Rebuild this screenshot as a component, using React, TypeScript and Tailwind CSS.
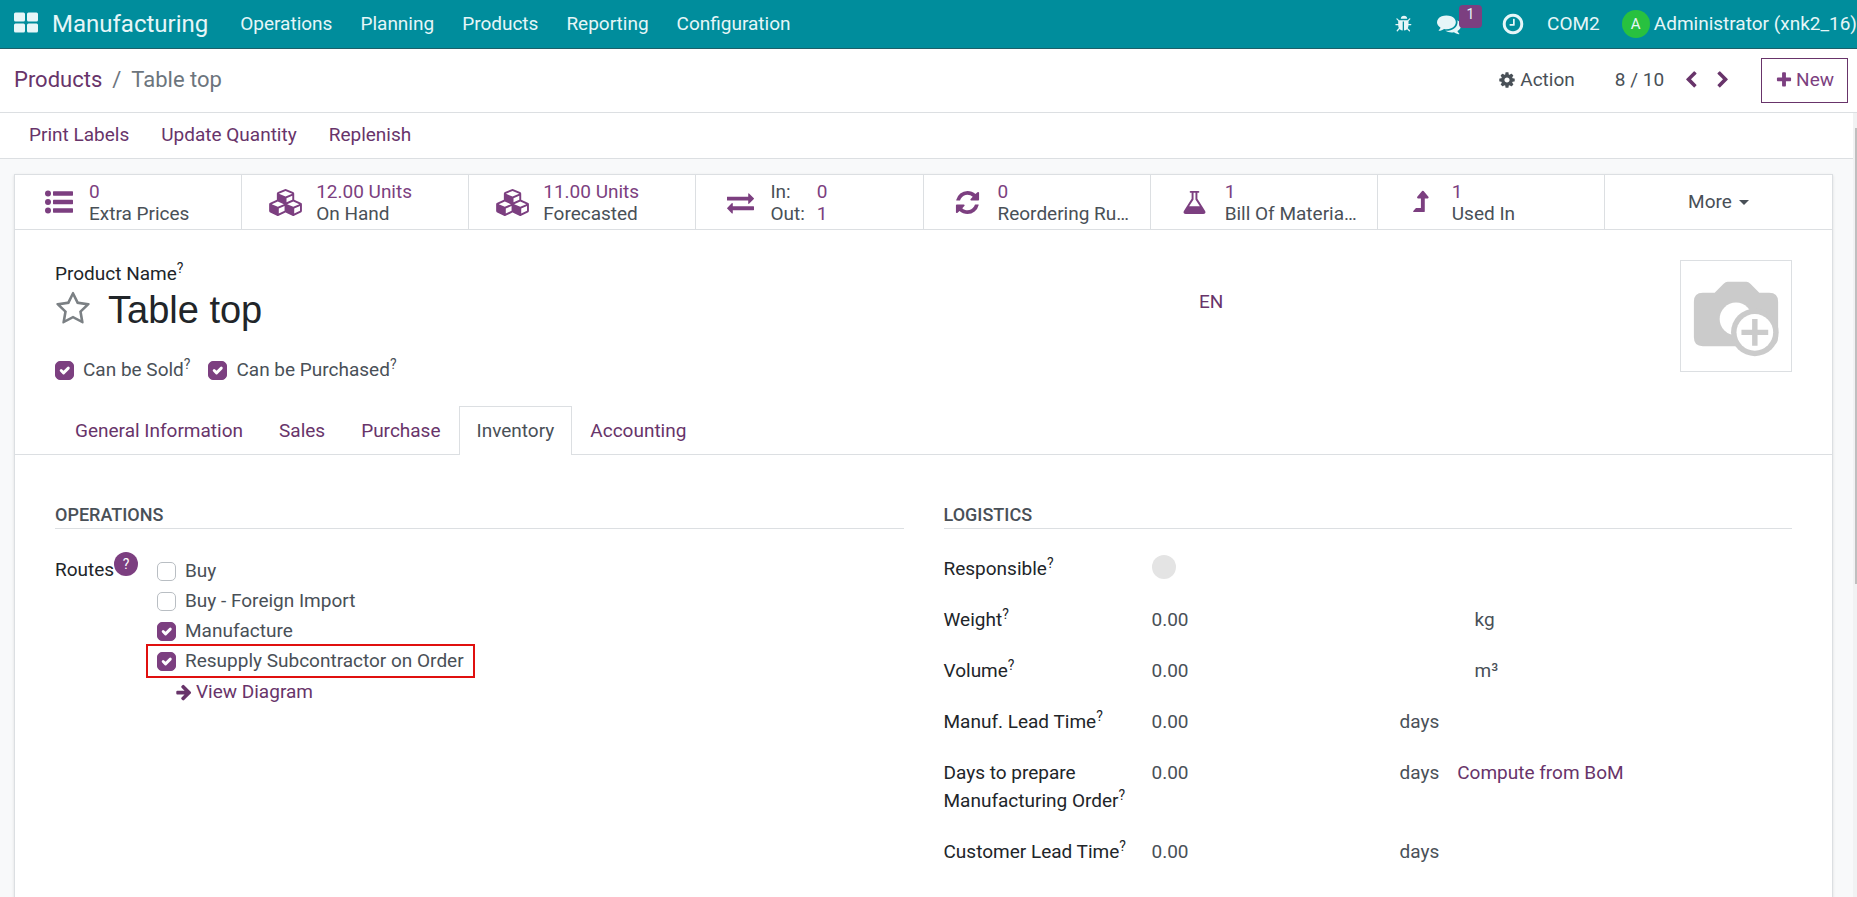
import React from "react";

const ICONS = {
  bug: "M1632 960q0 26-19 45t-45 19h-224q0 171-67 290l208 209q19 19 19 45t-19 45q-18 19-45 19t-45-19l-198-197q-5 5-15 13t-42 28.5-65 36.5-82 29-97 13v-896h-128v896q-51 0-101.5-13.5t-87-33-66-39-43.5-32.5l-15-14-183 207q-20 21-48 21-24 0-43-16-19-18-20.5-44.5t15.5-46.5l202-227q-58-114-58-274h-224q-26 0-45-19t-19-45 19-45 45-19h224v-294l-173-173q-19-19-19-45t19-45 45-19 45 19l173 173h844l173-173q19-19 45-19t45 19 19 45-19 45l-173 173v294h224q26 0 45 19t19 45zm-416-576h-640q0-133 93.5-226.5t226.5-93.5 226.5 93.5 93.5 226.5z",
  comments:
    "M1408 768q0 139-94 257t-256.5 186.5-353.5 68.5q-86 0-176-16-124 88-278 128-36 9-86 16h-3q-11 0-20.5-8t-11.5-21q-1-3-1-6.5t.5-6.5 2-6l2.5-5 3.5-5.5 4-5 4.5-5 4-4.5q5-6 23-25t26-29.5 22.5-29 25-38.5 20.5-44q-124-72-195-177t-71-224q0-139 94-257t256.5-186.5 353.5-68.5 353.5 68.5 256.5 186.5 94 257zm384 256q0 120-71 224.5t-195 176.5q10 24 20.5 44t25 38.5 22.5 29 26 29.5 23 25q1 1 4 4.5t4.5 5 4 5 3.5 5.5l2.5 5 2 6 .5 6.5-1 6.5q-3 14-13 22t-22 7q-50-7-86-16-154-40-278-128-90 16-176 16-271 0-472-132 58 4 88 4 161 0 309-45t264-129q125-92 192-212t67-254q0-77-23-152 129 71 204 178t75 230z",
  clock:
    "M1024 544v448q0 14-9 23t-23 9h-320q-14 0-23-9t-9-23v-64q0-14 9-23t23-9h224v-352q0-14 9-23t23-9h64q14 0 23 9t9 23zm416 352q0-148-73-273t-198-198-273-73-273 73-198 198-73 273 73 273 198 198 273 73 273-73 198-198 73-273zm224 0q0 209-103 385.5t-279.5 279.5-385.5 103-385.5-103-279.5-279.5-103-385.5 103-385.5 279.5-279.5 385.5-103 385.5 103 279.5 279.5 103 385.5z",
  gear: "M1152 896q0-106-75-181t-181-75-181 75-75 181 75 181 181 75 181-75 75-181zm512-109v222q0 12-8 23t-20 13l-185 28q-19 54-39 91 35 50 107 138 10 12 10 25t-9 23q-27 37-99 108t-94 71q-12 0-26-9l-138-108q-44 23-91 38-16 136-29 186-7 28-36 28h-222q-14 0-24.5-8.5t-11.5-21.5l-28-184q-49-16-90-37l-141 107q-10 9-25 9-14 0-25-11-126-114-165-168-7-10-7-23 0-12 8-23 15-21 51-66.5t54-70.5q-27-50-41-99l-183-27q-13-2-21-12.5t-8-23.5v-222q0-12 8-23t19-13l186-28q14-46 39-92-40-57-107-138-10-12-10-24 0-10 9-23 26-36 98.5-107.5t94.5-71.5q13 0 26 10l138 107q44-23 91-38 16-136 29-186 7-28 36-28h222q14 0 24.5 8.5t11.5 21.5l28 184q49 16 90 37l142-107q9-9 24-9 13 0 25 10 129 119 165 170 7 8 7 22 0 12-8 23-15 21-51 66.5t-54 70.5q26 50 41 98l183 28q13 2 21 12.5t8 23.5z",
  left: "M1427 301l-531 531 531 531q19 19 19 45t-19 45l-166 166q-19 19-45 19t-45-19l-742-742q-19-19-19-45t19-45l742-742q19-19 45-19t45 19l166 166q19 19 19 45t-19 45z",
  right:
    "M1363 877l-742 742q-19 19-45 19t-45-19l-166-166q-19-19-19-45t19-45l531-531-531-531q-19-19-19-45t19-45l166-166q19-19 45-19t45 19l742 742q19 19 19 45t-19 45z",
  plus: "M1600 736v192q0 40-28 68t-68 28h-416v416q0 40-28 68t-68 28h-192q-40 0-68-28t-28-68v-416h-416q-40 0-68-28t-28-68v-192q0-40 28-68t68-28h416v-416q0-40 28-68t68-28h192q40 0 68 28t28 68v416h416q40 0 68 28t28 68z",
  exchange:
    "M1792 1184v192q0 13-9.5 22.5t-22.5 9.5h-1376v192q0 13-9.5 22.5t-22.5 9.5q-12 0-24-10l-319-320q-9-9-9-22 0-14 9-23l320-320q9-9 23-9 13 0 22.5 9.5t9.5 22.5v192h1376q13 0 22.5 9.5t9.5 22.5zm0-544q0 14-9 23l-320 320q-9 9-23 9-13 0-22.5-9.5t-9.5-22.5v-192h-1376q-13 0-22.5-9.5t-9.5-22.5v-192q0-13 9.5-22.5t22.5-9.5h1376v-192q0-14 9-23t23-9q12 0 24 10l319 319q9 9 9 23z",
  refresh:
    "M1639 1056q0 5-1 7-64 268-268 434.5t-478 166.5q-146 0-282.5-55t-243.5-157l-129 129q-19 19-45 19t-45-19-19-45v-448q0-26 19-45t45-19h448q26 0 45 19t19 45-19 45l-137 137q71 66 161 102t187 36q134 0 250-65t186-179q11-17 53-117 8-23 30-23h192q13 0 22.5 9.5t9.5 22.5zm25-800v448q0 26-19 45t-45 19h-448q-26 0-45-19t-19-45 19-45l138-138q-148-137-349-137-134 0-250 65t-186 179q-11 17-53 117-8 23-30 23h-199q-13 0-22.5-9.5t-9.5-22.5v-7q65-268 270-434.5t480-166.5q146 0 284 55.5t245 156.5l130-129q19-19 45-19t45 19 19 45z",
  flask:
    "M1591 1448q56 89 21.5 152.5t-140.5 63.5h-1152q-106 0-140.5-63.5t21.5-152.5l503-793v-399h-64q-26 0-45-19t-19-45 19-45 45-19h512q26 0 45 19t19 45-19 45-45 19h-64v399zm-779-725l-272 429h712l-272-429-20-31v-436h-128v436z",
  levelUp:
    "M1363 587q-18 37-58 37h-192v864q0 14-9 23t-23 9h-704q-21 0-29-18-8-20 4-35l160-192q9-11 25-11h320v-640h-192q-40 0-58-37-17-37 9-68l320-384q18-22 49-22t49 22l320 384q27 32 9 68z",
  star: "M1201 1004l306-297-422-62-189-382-189 382-422 62 306 297-73 421 378-199 377 199zm527-357q0 22-26 48l-363 354 86 500q1 7 1 20 0 50-41 50-19 0-40-12l-449-236-449 236q-22 12-40 12-21 0-31.5-14.5t-10.5-35.5q0-6 2-20l86-500-364-354q-25-27-25-48 0-37 56-46l502-73 225-455q19-41 49-41t49 41l225 455 502 73q56 9 56 46z",
  arrow:
    "M1600 960q0 54-37 91l-651 651q-39 37-91 37-51 0-90-37l-75-75q-38-38-38-91t38-91l293-293h-704q-52 0-84.5-37.5t-32.5-90.5v-128q0-53 32.5-90.5t84.5-37.5h704l-293-294q-38-36-38-90t38-90l75-75q38-38 90-38 53 0 91 38l651 651q37 35 37 90z",
};

function Icon({ name, className }: { name: keyof typeof ICONS; className: string }) {
  return (
    <svg viewBox="0 0 1792 1792" fill="currentColor" aria-hidden="true" className={`shrink-0 ${className}`}>
      <path d={ICONS[name]} />
    </svg>
  );
}

function Cubes() {
  return (
    <svg viewBox="0 0 2304 1792" fill="currentColor" aria-hidden="true" className="h-[27px] w-[35px]">
      <path d="M640 1632l384-192v-314l-384 164v342zm-64-454l404-173-404-173-404 173zm1088 454l384-192v-314l-384 164v342zm-64-454l404-173-404-173-404 173zm-448-293l384-165v-266l-384 164v267zm-64-379l441-189-441-189-441 189zm1088 518v416q0 36-19 67t-52 47l-448 224q-25 14-57 14t-57-14l-448-224q-4-2-7-4-2 2-7 4l-448 224q-25 14-57 14t-57-14l-448-224q-33-16-52-47t-19-67v-416q0-38 21.5-70t56.5-48l434-186v-400q0-38 21.5-70t56.5-48l448-192q23-10 50-10t50 10l448 192q35 16 56.5 48t21.5 70v400l434 186q36 16 57 48t21 70z" />
    </svg>
  );
}

function ListIcon() {
  return (
    <svg viewBox="0 0 28 24" fill="currentColor" aria-hidden="true" className="h-6 w-7">
      {[3.5, 12, 20.5].map((y) => (
        <g key={y}>
          <circle cx="3" cy={y} r="3" />
          <rect x="8" y={y - 2.2} width="20" height="4.4" rx="0.6" />
        </g>
      ))}
    </svg>
  );
}

function Help() {
  return <sup className="text-[14px] leading-none">?</sup>;
}

function Check({ id, label, help, checked }: { id: string; label: string; help?: boolean; checked?: boolean }) {
  return (
    <div className="flex items-center">
      <span className="relative flex">
        <input
          id={id}
          type="checkbox"
          defaultChecked={checked}
          className="peer size-[19px] appearance-none rounded-[5px] border border-[#b9bec3] bg-white checked:border-[#7c3f80] checked:bg-[#7c3f80]"
        />
        <svg
          viewBox="0 0 20 20"
          fill="none"
          stroke="#fff"
          strokeWidth="3"
          strokeLinecap="round"
          strokeLinejoin="round"
          aria-hidden="true"
          className="pointer-events-none absolute inset-0 hidden size-[19px] peer-checked:block"
        >
          <path d="M6.500 10l2.500 2.500l5-5" />
        </svg>
      </span>
      <label htmlFor={id} className="pl-[9px]">
        {label}
        {help && <Help />}
      </label>
    </div>
  );
}

function Stat({ icon, children }: { icon: React.ReactNode; children: React.ReactNode }) {
  return (
    <button type="button" className="flex h-[54px] items-center border-r border-[#dcdfe2] pl-[17px] text-left leading-[22px]">
      <span className="flex w-[54px] shrink-0 justify-center text-[#7c3f80]">{icon}</span>
      <span className="pt-px pl-[3px] whitespace-nowrap">{children}</span>
    </button>
  );
}

function StatText({ value, label }: { value: string; label: string }) {
  return (
    <>
      <span className="block text-[#7c3f80]">{value}</span>
      <span className="block">{label}</span>
    </>
  );
}

function Field({
  id,
  label,
  unit,
  wide,
  children,
}: {
  id: string;
  label: string;
  unit: string;
  wide?: boolean;
  children?: React.ReactNode;
}) {
  return (
    <div className="flex pb-[23px]">
      <label htmlFor={id} className="w-[208px] shrink-0 pr-5 text-[#212529]">
        {label}
        <Help />
      </label>
      <input
        id={id}
        defaultValue="0.00"
        className={`h-7 bg-transparent outline-none ${wide ? "w-[323px]" : "w-[248px]"}`}
      />
      <span>{unit}</span>
      {children}
    </div>
  );
}

function Heading({ children }: { children: React.ReactNode }) {
  return (
    <h2 className="border-b border-[#dcdfe2] text-[18px] leading-[27px] font-medium uppercase">{children}</h2>
  );
}

const MENUS = ["Operations", "Planning", "Products", "Reporting", "Configuration"];
const TABS = ["General Information", "Sales", "Purchase", "Inventory", "Accounting"];

export default function App() {
  return (
    <div className="flex h-screen flex-col overflow-hidden bg-white font-[Roboto,sans-serif] text-[19px] leading-7 text-[#495057]">
      <header className="flex h-[49px] shrink-0 items-center overflow-hidden border-b border-[#1d5f69] bg-[#008d9c] pl-[14px] text-[#e6f6f8]">
        <button type="button" aria-label="Home menu">
          <svg viewBox="0 0 24 24" fill="currentColor" aria-hidden="true" className="mb-1 size-6">
            <rect x="0" y="2.5" width="11" height="9" rx="1.5" />
            <rect x="13" y="2.5" width="11" height="9" rx="1.5" />
            <rect x="0" y="13.5" width="11" height="9" rx="1.5" />
            <rect x="13" y="13.5" width="11" height="9" rx="1.5" />
          </svg>
        </button>
        <a href="#app" className="pl-[14px] text-[24px]">
          Manufacturing
        </a>
        <nav className="flex pl-[18px]">
          {MENUS.map((m) => (
            <button key={m} type="button" className="px-[14px]">
              {m}
            </button>
          ))}
        </nav>
        <div className="ml-auto flex shrink-0 items-center whitespace-nowrap">
          <button type="button" aria-label="Debug">
            <Icon name="bug" className="size-[18px]" />
          </button>
          <button type="button" aria-label="Messages" className="relative ml-6">
            <Icon name="comments" className="size-6" />
            <span className="absolute -top-[7px] left-[22px] h-[23px] w-[23px] rounded-[4px] bg-[#7c3f80] text-center text-[14px] leading-[18px]">
              1
            </span>
          </button>
          <button type="button" aria-label="Activities" className="ml-10">
            <Icon name="clock" className="size-6" />
          </button>
          <button type="button" className="ml-[22px]">
            COM2
          </button>
          <button type="button" className="ml-[22px] flex items-center gap-1">
            <span className="size-7 rounded-full bg-[#28c13f] text-center text-[15px] leading-7">A</span>
            Administrator (xnk2_16)
          </button>
        </div>
      </header>

      <div className="flex h-16 shrink-0 items-center border-b border-[#dcdfe2] pr-[9px] pl-[14px]">
        <nav aria-label="Breadcrumb" className="pb-0.5 text-[22px] text-[#6c757d]">
          <a href="#products" className="text-[#68346a]">
            Products
          </a>
          <span className="px-[10px]">/</span>
          <span>Table top</span>
        </nav>
        <div className="ml-auto flex items-center pb-0.5">
          <button type="button" className="flex items-center gap-1">
            <Icon name="gear" className="size-[18px]" />
            Action
          </button>
          <span className="ml-10">8 / 10</span>
          <button type="button" aria-label="Previous" className="ml-[18px] text-[#68346a]">
            <Icon name="left" className="size-[18px]" />
          </button>
          <button type="button" aria-label="Next" className="ml-[14px] text-[#68346a]">
            <Icon name="right" className="size-[18px]" />
          </button>
        </div>
        <button
          type="button"
          className="ml-[29px] flex h-[45px] items-center gap-[3px] border border-[#68346a] px-[13px] pb-0.5 text-[#7c3f80]"
        >
          <Icon name="plus" className="size-[18px]" />
          New
        </button>
      </div>

      <div className="flex min-h-0 flex-1">
        <div className="min-w-0 flex-1 overflow-hidden bg-[#f8f9fa]">
          <div className="flex h-[46px] items-center gap-8 border-b border-[#dcdfe2] bg-white pb-0.5 pl-[29px] text-[#68346a]">
            <button type="button">Print Labels</button>
            <button type="button">Update Quantity</button>
            <button type="button">Replenish</button>
          </div>

          <main className="mt-[15px] mr-5 ml-[14px] border border-[#dcdfe2] bg-white pb-10 shadow-sm">
            <div className="grid grid-cols-8 border-b border-[#dcdfe2]">
              <Stat icon={<ListIcon />}>
                <StatText value="0" label="Extra Prices" />
              </Stat>
              <Stat icon={<Cubes />}>
                <StatText value="12.00 Units" label="On Hand" />
              </Stat>
              <Stat icon={<Cubes />}>
                <StatText value="11.00 Units" label="Forecasted" />
              </Stat>
              <Stat icon={<Icon name="exchange" className="size-[27px]" />}>
                <span className="grid grid-cols-[auto_auto] gap-x-3">
                  <span>In:</span>
                  <span className="text-[#7c3f80]">0</span>
                  <span>Out:</span>
                  <span className="text-[#7c3f80]">1</span>
                </span>
              </Stat>
              <Stat icon={<Icon name="refresh" className="size-[27px]" />}>
                <StatText value="0" label="Reordering Ru…" />
              </Stat>
              <Stat icon={<Icon name="flask" className="size-[27px]" />}>
                <StatText value="1" label="Bill Of Materia…" />
              </Stat>
              <Stat icon={<Icon name="levelUp" className="size-[27px]" />}>
                <StatText value="1" label="Used In" />
              </Stat>
              <button type="button" className="flex items-center justify-center gap-[7px]">
                More
                <span className="border-x-5 border-t-5 border-x-transparent border-t-current" />
              </button>
            </div>

            <div className="flex justify-between px-10 pt-[30px]">
              <div className="min-w-0 flex-1">
                <label htmlFor="name" className="block text-[#212529]">
                  Product Name
                  <Help />
                </label>
                <div className="flex h-[46px] items-center">
                  <button type="button" aria-label="Favorite" className="pb-1 text-[#7b8084]">
                    <Icon name="star" className="size-9" />
                  </button>
                  <input
                    id="name"
                    defaultValue="Table top"
                    className="mb-0.5 ml-[17px] h-11 w-[1091px] bg-transparent font-['Liberation_Sans',sans-serif] text-[38px] text-[#212529] outline-none"
                  />
                  <button type="button" className="mb-[18px] text-[#68346a]">
                    EN
                  </button>
                </div>
                <div className="mt-[22px] flex gap-[18px]">
                  <Check id="sold" label="Can be Sold" help checked />
                  <Check id="purchased" label="Can be Purchased" help checked />
                </div>
              </div>
              <button type="button" aria-label="Upload image" className="size-28 border border-[#dcdfe2]">
                <svg viewBox="0 0 111 111" aria-hidden="true" className="size-full">
                  <path
                    d="M22 32h12l9-9q2-2 4-2h19q2 0 4 2l9 9h10q9 0 9 9v36q0 9-9 9H22q-9 0-9-9V41q0-9 9-9z"
                    fill="#cbcbcb"
                  />
                  <circle cx="55.5" cy="58.5" r="16.5" fill="#fff" />
                  <circle cx="74.5" cy="72" r="24" fill="#cbcbcb" />
                  <circle cx="74.5" cy="72" r="18.5" fill="#fff" />
                  <path d="M61 72h27M74.500 58.500v27" stroke="#cbcbcb" strokeWidth="5.5" />
                </svg>
              </button>
            </div>

            <div role="tablist" className="mt-[22px] flex border-b border-[#dcdfe2] pl-[42px]">
              {TABS.map((t) => (
                <button
                  key={t}
                  type="button"
                  role="tab"
                  aria-selected={t === "Inventory"}
                  className={`-mb-px h-[49px] border border-b-0 px-[17px] ${
                    t === "Inventory" ? "border-[#dcdfe2] bg-white" : "border-transparent text-[#68346a]"
                  }`}
                >
                  {t}
                </button>
              ))}
            </div>

            <div className="grid grid-cols-2 gap-10 px-10 pt-[46px]">
              <section>
                <Heading>Operations</Heading>
                <div className="flex pt-[27px]">
                  <div className="flex w-[102px] shrink-0 items-start text-[#212529]">
                    <span>Routes</span>
                    <button
                      type="button"
                      aria-label="Help"
                      className="-mt-1 size-6 rounded-full bg-[#7c3f80] text-[14px] leading-6 text-white"
                    >
                      ?
                    </button>
                  </div>
                  <div className="leading-[30px]">
                    <Check id="buy" label="Buy" />
                    <Check id="foreign" label="Buy - Foreign Import" />
                    <Check id="manufacture" label="Manufacture" checked />
                    <div className="relative">
                      <Check id="resupply" label="Resupply Subcontractor on Order" checked />
                      <span className="pointer-events-none absolute -inset-x-[11px] -inset-y-0.5 border-2 border-[#e0100f]" />
                    </div>
                    <button type="button" className="flex items-center gap-[3px] pt-px pl-[18px] text-[#68346a]">
                      <Icon name="arrow" className="size-[18px]" />
                      View Diagram
                    </button>
                  </div>
                </div>
              </section>

              <section>
                <Heading>Logistics</Heading>
                <div className="pt-[26px]">
                  <div className="flex pb-[23px]">
                    <span className="w-[208px] shrink-0 text-[#212529]">
                      Responsible
                      <Help />
                    </span>
                    <span className="size-6 rounded-full bg-[#e4e4e4]" />
                  </div>
                  <Field id="weight" label="Weight" unit="kg" wide />
                  <Field id="volume" label="Volume" unit="m³" wide />
                  <Field id="manuf" label="Manuf. Lead Time" unit="days" />
                  <Field id="prepare" label="Days to prepare Manufacturing Order" unit="days">
                    <button type="button" className="ml-[18px] h-7 text-[#68346a]">
                      Compute from BoM
                    </button>
                  </Field>
                  <Field id="customer" label="Customer Lead Time" unit="days" />
                </div>
              </section>
            </div>
          </main>
        </div>
        <div aria-hidden="true" className="w-1 bg-[#f1f2f3] pt-[15px] pl-0.5">
          <div className="h-[456px] bg-[#bfbfbf]" />
        </div>
      </div>
    </div>
  );
}
